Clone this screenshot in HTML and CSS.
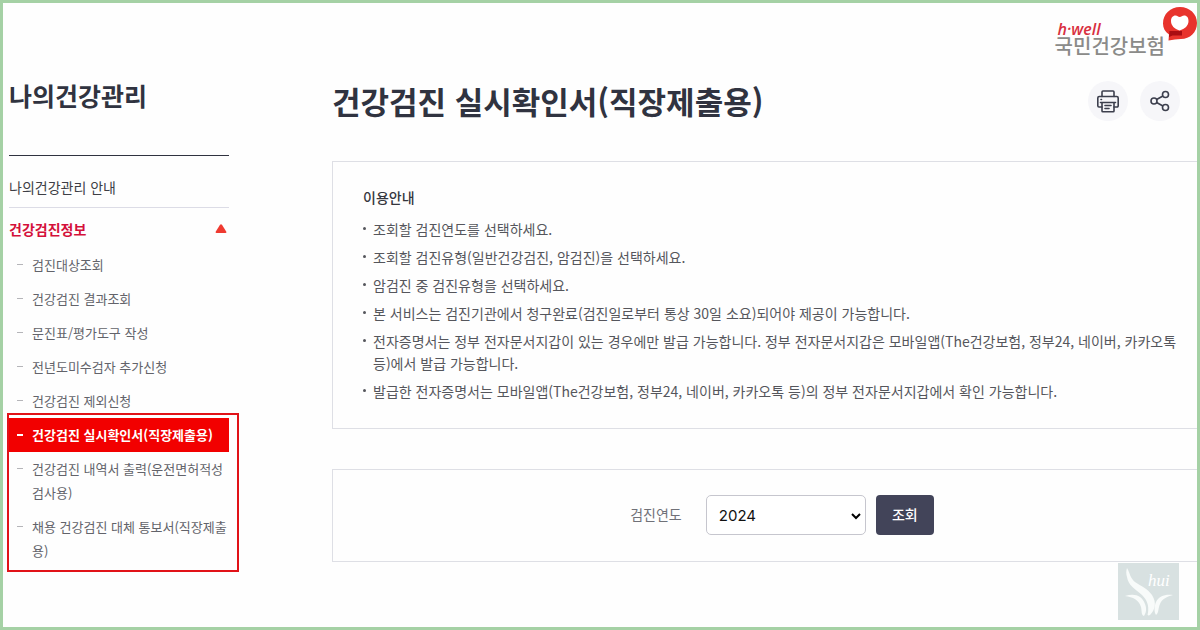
FILE: index.html
```html
<!DOCTYPE html>
<html lang="ko">
<head>
<meta charset="utf-8">
<meta name="viewport" content="width=device-width, initial-scale=1">
<title>건강검진 실시확인서(직장제출용)</title>
<link rel="stylesheet" href="styles.css">
</head>
<body>
<div class="page">
  <header class="site-header">
    <a class="logo" href="#">
      <span class="logo-text">
        <span class="logo-en">h·well</span>
        <span class="logo-ko">국민건강보험</span>
      </span>
      <svg class="logo-mark" width="34" height="34" viewBox="0 0 34 34" aria-hidden="true">
        <path d="M17 0C26.500 0 34 6.800 34 16c0 9.500-7 16-16 16-4 .2-8 .8-12.500 1.500L6 27.500C2 25 0 21 0 16.500 0 7 7.500 0 17 0z" fill="#e8332c"/>
        <path d="M6.500 24h12.500v4.500H9.500L6 30z" fill="#a90d12"/>
        <path d="M16.500 23.500C11.500 22 8 18.500 8 14c0-3.200 1.800-5.500 4.500-5.500 2 0 2.500 1.500 4.200 1.500s2.500-1.500 4.500-1.500c2.800 0 4.300 2.300 4.300 5.500 0 4.500-3.500 8-9 9.500z" fill="#fff"/>
      </svg>
    </a>
  </header>
  <div class="layout">
    <nav class="sidebar" aria-label="나의건강관리">
      <h2 class="side-title">나의건강관리</h2>
      <a class="side-link" href="#">나의건강관리 안내</a>
      <a class="side-link side-open" href="#">건강검진정보
        <svg width="12" height="10" viewBox="0 0 12 10" aria-hidden="true"><path d="M5 .8Q6-.3 7 .8l4.300 7Q11.800 9 10.500 9h-9Q.2 9 .7 7.800z" fill="#ef3a30"/></svg>
      </a>
      <ul class="sub">
        <li><a href="#">검진대상조회</a></li>
        <li><a href="#">건강검진 결과조회</a></li>
        <li><a href="#">문진표/평가도구 작성</a></li>
        <li><a href="#">전년도미수검자 추가신청</a></li>
        <li><a href="#">건강검진 제외신청</a></li>
      </ul>
      <ul class="sub sub-marked">
        <li><a class="current" href="#" aria-current="page">건강검진 실시확인서(직장제출용)</a></li>
        <li><a href="#">건강검진 내역서 출력(운전면허적성검사용)</a></li>
        <li><a href="#">채용 건강검진 대체 통보서(직장제출용)</a></li>
      </ul>
    </nav>
    <main class="content">
      <div class="title-row">
        <h1 class="title">건강검진 실시확인서(직장제출용)</h1>
        <div class="tools">
          <button class="tool" type="button" aria-label="인쇄">
            <svg width="24" height="24" viewBox="0 0 24 24" fill="none" stroke="#3c3f4d" stroke-width="1.600" stroke-linejoin="round" stroke-linecap="round" aria-hidden="true">
              <path d="M6 7.500V3q0-1 1-1h10q1 0 1 1v4.500"/>
              <path d="M6 18H3q-1.200 0-1.200-1.200V9q0-1.500 1.500-1.500h17.400q1.500 0 1.500 1.500v7.800Q22.200 18 21 18h-3"/>
              <path d="M4.500 13.500h15M6 13.500V22q0 .8.800.8h10.400q.8 0 .8-.8v-8.500M9 16.500h6M9 19.500h4M5 10.500h.5"/>
            </svg>
          </button>
          <button class="tool" type="button" aria-label="공유">
            <svg width="24" height="24" viewBox="0 0 24 24" fill="none" stroke="#3c3f4d" stroke-width="1.600" aria-hidden="true">
              <circle cx="6" cy="12" r="3"/><circle cx="17.500" cy="5.500" r="3"/><circle cx="17.500" cy="18.500" r="3"/>
              <path d="M8.600 10.500 14.900 7M8.600 13.500l6.300 3.500"/>
            </svg>
          </button>
        </div>
      </div>
      <section class="panel guide">
        <h3 class="guide-title">이용안내</h3>
        <ul class="guide-list">
          <li>조회할 검진연도를 선택하세요.</li>
          <li>조회할 검진유형(일반건강검진, 암검진)을 선택하세요.</li>
          <li>암검진 중 검진유형을 선택하세요.</li>
          <li>본 서비스는 검진기관에서 청구완료(검진일로부터 통상 30일 소요)되어야 제공이 가능합니다.</li>
          <li>전자증명서는 정부 전자문서지갑이 있는 경우에만 발급 가능합니다. 정부 전자문서지갑은 모바일앱(The건강보험, 정부24, 네이버, 카카오톡 등)에서 발급 가능합니다.</li>
          <li>발급한 전자증명서는 모바일앱(The건강보험, 정부24, 네이버, 카카오톡 등)의 정부 전자문서지갑에서 확인 가능합니다.</li>
        </ul>
      </section>
      <form class="panel search">
        <label class="search-label" for="year">검진연도</label>
        <span class="select-wrap">
          <select class="year" id="year"><option>2024</option></select>
          <svg class="chevron" width="10" height="7" viewBox="0 0 10 7" fill="none" stroke="#000" stroke-width="2" aria-hidden="true"><path d="M1 1l4 4 4-4"/></svg>
        </span>
        <button class="submit" type="button">조회</button>
      </form>
    </main>
  </div>
  <svg class="watermark" width="61" height="57" viewBox="0 0 61 57" role="img" aria-label="hui">
    <rect width="61" height="57" fill="#d8e1e1"/>
    <path d="M9 5c3 5 3 10 8 14 6 4 13 7 17 13 5 8 3 15-2 20-2 1-3 0-2-2 1-8-1-13-6-18-7-6-14-10-15-18-1-3-1-6 0-9z" fill="#f8fbfa"/>
    <path d="M7 33c9-3 17-1 20 8 2 5 1 9-1 12-3-1-2-5-3-9-2-7-8-10-16-11zM55 32c-8-1-14 1-17 7-2 5-2 10 0 13 3-2 2-7 4-11 2-5 6-7 13-9z" fill="#f8fbfa"/>
    <text class="watermark-text" x="30" y="23">hui</text>
  </svg>
</div>
</body>
</html>
```
FILE: styles.css
```css
* { box-sizing: border-box; }

body {
  margin: 0;
  background: #fefefe;
  color: #55565c;
  font-family: "Noto Sans CJK KR", sans-serif;
  font-size: 14px;
}

h1, h2, h3, ul { margin: 0; padding: 0; }
ul { list-style: none; }
a { color: inherit; text-decoration: none; }
button, select { font-family: inherit; }

.page {
  position: relative;
  min-height: 100vh;
  border: 3px solid #a5d1a5;
}

.site-header {
  display: flex;
  justify-content: flex-end;
  height: 72px;
  padding: 4px 0 0;
}

.logo { display: flex; align-items: flex-start; }
.logo-text { display: flex; flex-direction: column; padding-top: 12px; }
.logo-en {
  padding-left: 3px;
  color: #d9303f;
  font: italic 600 16px/20px "Open Sans", sans-serif;
}
.logo-ko {
  margin-right: -2px;
  color: #8b8b89;
  font-size: 20px;
  font-weight: 500;
  line-height: 14px;
}

.layout {
  display: grid;
  grid-template-columns: 220px minmax(0, 1fr);
  column-gap: 103px;
  padding-left: 6px;
}

.side-title {
  height: 81px;
  padding-top: 2px;
  border-bottom: 1px solid #303340;
  color: #303340;
  font-size: 25px;
  font-weight: 700;
  line-height: 36px;
}
.side-link {
  display: flex;
  align-items: center;
  justify-content: space-between;
  height: 40px;
  color: #3d3e45;
}
.side-title + .side-link {
  height: 52px;
  padding-top: 10px;
  border-bottom: 1px solid #dcdce6;
}
.side-open {
  padding-right: 2px;
  padding-top: 2px;
  color: #d4103a;
  font-weight: 700;
}

.sub a {
  display: block;
  position: relative;
  padding: 5px 0 5px 23px;
  color: #62636a;
  font-size: 13px;
  line-height: 24px;
}
.sub a::before {
  content: "";
  position: absolute;
  top: 16px;
  left: 8px;
  width: 6px;
  height: 1px;
  background: #b5b5b9;
}
.sub .current {
  background: #f20000;
  color: #fff;
  font-weight: 700;
}
.sub .current::before { height: 2px; background: #fff; }
.sub-marked { position: relative; }
.sub-marked::after {
  content: "";
  position: absolute;
  inset: -5px -10px -4px -2px;
  border: 2px solid #e11218;
  pointer-events: none;
}

.title-row {
  display: flex;
  align-items: flex-start;
  justify-content: space-between;
  height: 86px;
  padding: 6px 17px 0 0;
}
.title {
  color: #303340;
  font-size: 31px;
  font-weight: 700;
  line-height: 40px;
}
.tools { display: flex; gap: 12px; }
.tool {
  display: grid;
  place-items: center;
  width: 40px;
  height: 40px;
  padding: 0;
  border: 0;
  border-radius: 50%;
  background: #f6f6f9;
}

.panel { border: 1px solid #dedfe5; border-right: 0; }
.guide { padding: 24px 8px 26px 30px; }
.guide-title { color: #35363d; font-size: 14px; font-weight: 500; line-height: 22px; }
.guide-list { display: grid; gap: 6px; margin-top: 10px; }
.guide-list li { position: relative; padding-left: 10px; line-height: 22px; }
.guide-list li::before {
  content: "";
  position: absolute;
  top: 9px;
  left: 0;
  width: 3px;
  height: 3px;
  border-radius: 50%;
  background: #55565c;
}

.search {
  display: flex;
  align-items: center;
  justify-content: center;
  gap: 10px;
  margin-top: 40px;
  padding: 25px 0 26px 34px;
}
.search-label { margin-right: 14px; padding-bottom: 2px; color: #707178; }
.select-wrap { position: relative; }
.year {
  display: block;
  appearance: none;
  width: 160px;
  height: 40px;
  padding: 0 12px;
  border: 1px solid #c6c6ce;
  border-radius: 5px;
  background: #fff;
  color: #111;
  font-family: Inter, sans-serif;
  font-size: 15px;
}
.chevron { position: absolute; top: 18px; right: 5px; pointer-events: none; }
.submit {
  width: 58px;
  height: 40px;
  padding: 0 0 2px;
  border: 0;
  border-radius: 4px;
  background: #424459;
  color: #fff;
  font-size: 14px;
  font-weight: 500;
}

.watermark { position: absolute; right: 18px; bottom: 7px; }
.watermark-text {
  fill: #fff;
  font: italic 400 17px "Liberation Serif", serif;
}
```
